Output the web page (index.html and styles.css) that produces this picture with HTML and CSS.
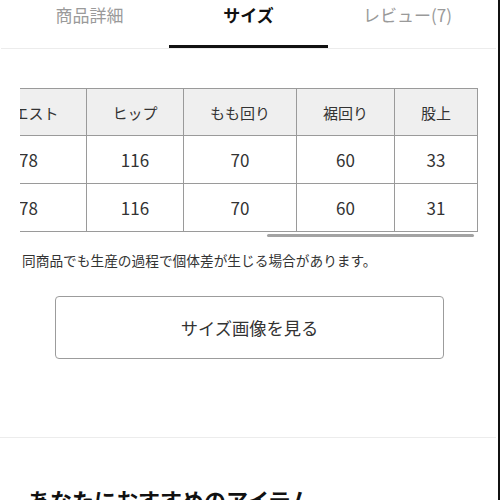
FILE: index.html
```html
<!DOCTYPE html>
<html lang="ja">
<head>
<meta charset="utf-8">
<title>サイズ</title>
<link rel="stylesheet" href="styles.css">
</head>
<body>
<div class="page">
  <nav class="tabs">
    <div class="tab">商品詳細</div>
    <div class="tab active">サイズ</div>
    <div class="tab">レビュー(7)</div>
  </nav>

  <div class="table-scroll">
    <table class="size-table">
      <colgroup>
        <col class="c1"><col class="c2"><col class="c3"><col class="c4"><col class="c5">
      </colgroup>
      <thead>
        <tr><th>ウエスト</th><th>ヒップ</th><th>もも回り</th><th>裾回り</th><th>股上</th></tr>
      </thead>
      <tbody>
        <tr><td>78</td><td>116</td><td>70</td><td>60</td><td>33</td></tr>
        <tr><td>78</td><td>116</td><td>70</td><td>60</td><td>31</td></tr>
      </tbody>
    </table>
    <div class="scroll-thumb"></div>
  </div>

  <p class="note">同商品でも生産の過程で個体差が生じる場合があります。</p>

  <div class="size-button">サイズ画像を見る</div>

  <div class="section-divider"></div>

  <h2 class="reco-title">あなたにおすすめのアイテム</h2>
</div>
</body>
</html>
```

FILE: styles.css
```css
html, body {
  margin: 0;
  padding: 0;
  height: 500px;
  overflow: hidden;
  background: #fff;
}
body {
  width: 498px;
  border-right: 2px solid #111;
  font-family: "Noto Sans CJK JP", "Noto Sans", sans-serif;
  color: #333;
}
.page {
  width: 496px;
}
.tabs {
  display: flex;
  justify-content: center;
  height: 48px;
  border-bottom: 1px solid #ececec;
  margin-left: 1px;
}
.tab {
  width: 159px;
  box-sizing: border-box;
  text-align: center;
  font-size: 17px;
  line-height: 29px;
  color: #9a9a9a;
}
.tab.active {
  color: #111;
  font-weight: 700;
  border-bottom: 3px solid #111;
}
.table-scroll {
  margin: 39px 0 0 20px;
  width: 460px;
  overflow: hidden;
}
.size-table {
  margin-left: -50px;
  width: 507px;
  table-layout: fixed;
  border-collapse: collapse;
}
.c1 { width: 116px; }
.c2 { width: 97px; }
.c3 { width: 113px; }
.c4 { width: 98px; }
.c5 { width: 83px; }
.size-table th,
.size-table td {
  border: 1px solid #9a9a9a;
  text-align: center;
  padding: 0;
  color: #333;
}
.size-table th {
  height: 46px;
  background: #efefef;
  font-size: 15px;
  font-weight: 400;
}
.size-table td {
  height: 47px;
  font-size: 17px;
}
.scroll-thumb {
  margin: 2px 0 0 247px;
  width: 207px;
  height: 3px;
  background: #a3a3a3;
  border-radius: 2px;
}
.note {
  margin: 13px 0 0 22px;
  font-size: 13.7px;
  line-height: 20px;
  color: #333;
}
.size-button {
  margin: 26px 0 0 55px;
  width: 389px;
  height: 63px;
  box-sizing: border-box;
  border: 1px solid #9c9c9c;
  border-radius: 4px;
  display: flex;
  align-items: center;
  justify-content: center;
  font-size: 17.3px;
  color: #333;
}
.section-divider {
  margin-top: 78px;
  height: 1px;
  background: #ececec;
}
.reco-title {
  margin: 46px 0 0 28px;
  font-size: 22px;
  line-height: 30px;
  font-weight: 700;
  color: #111;
}
```
